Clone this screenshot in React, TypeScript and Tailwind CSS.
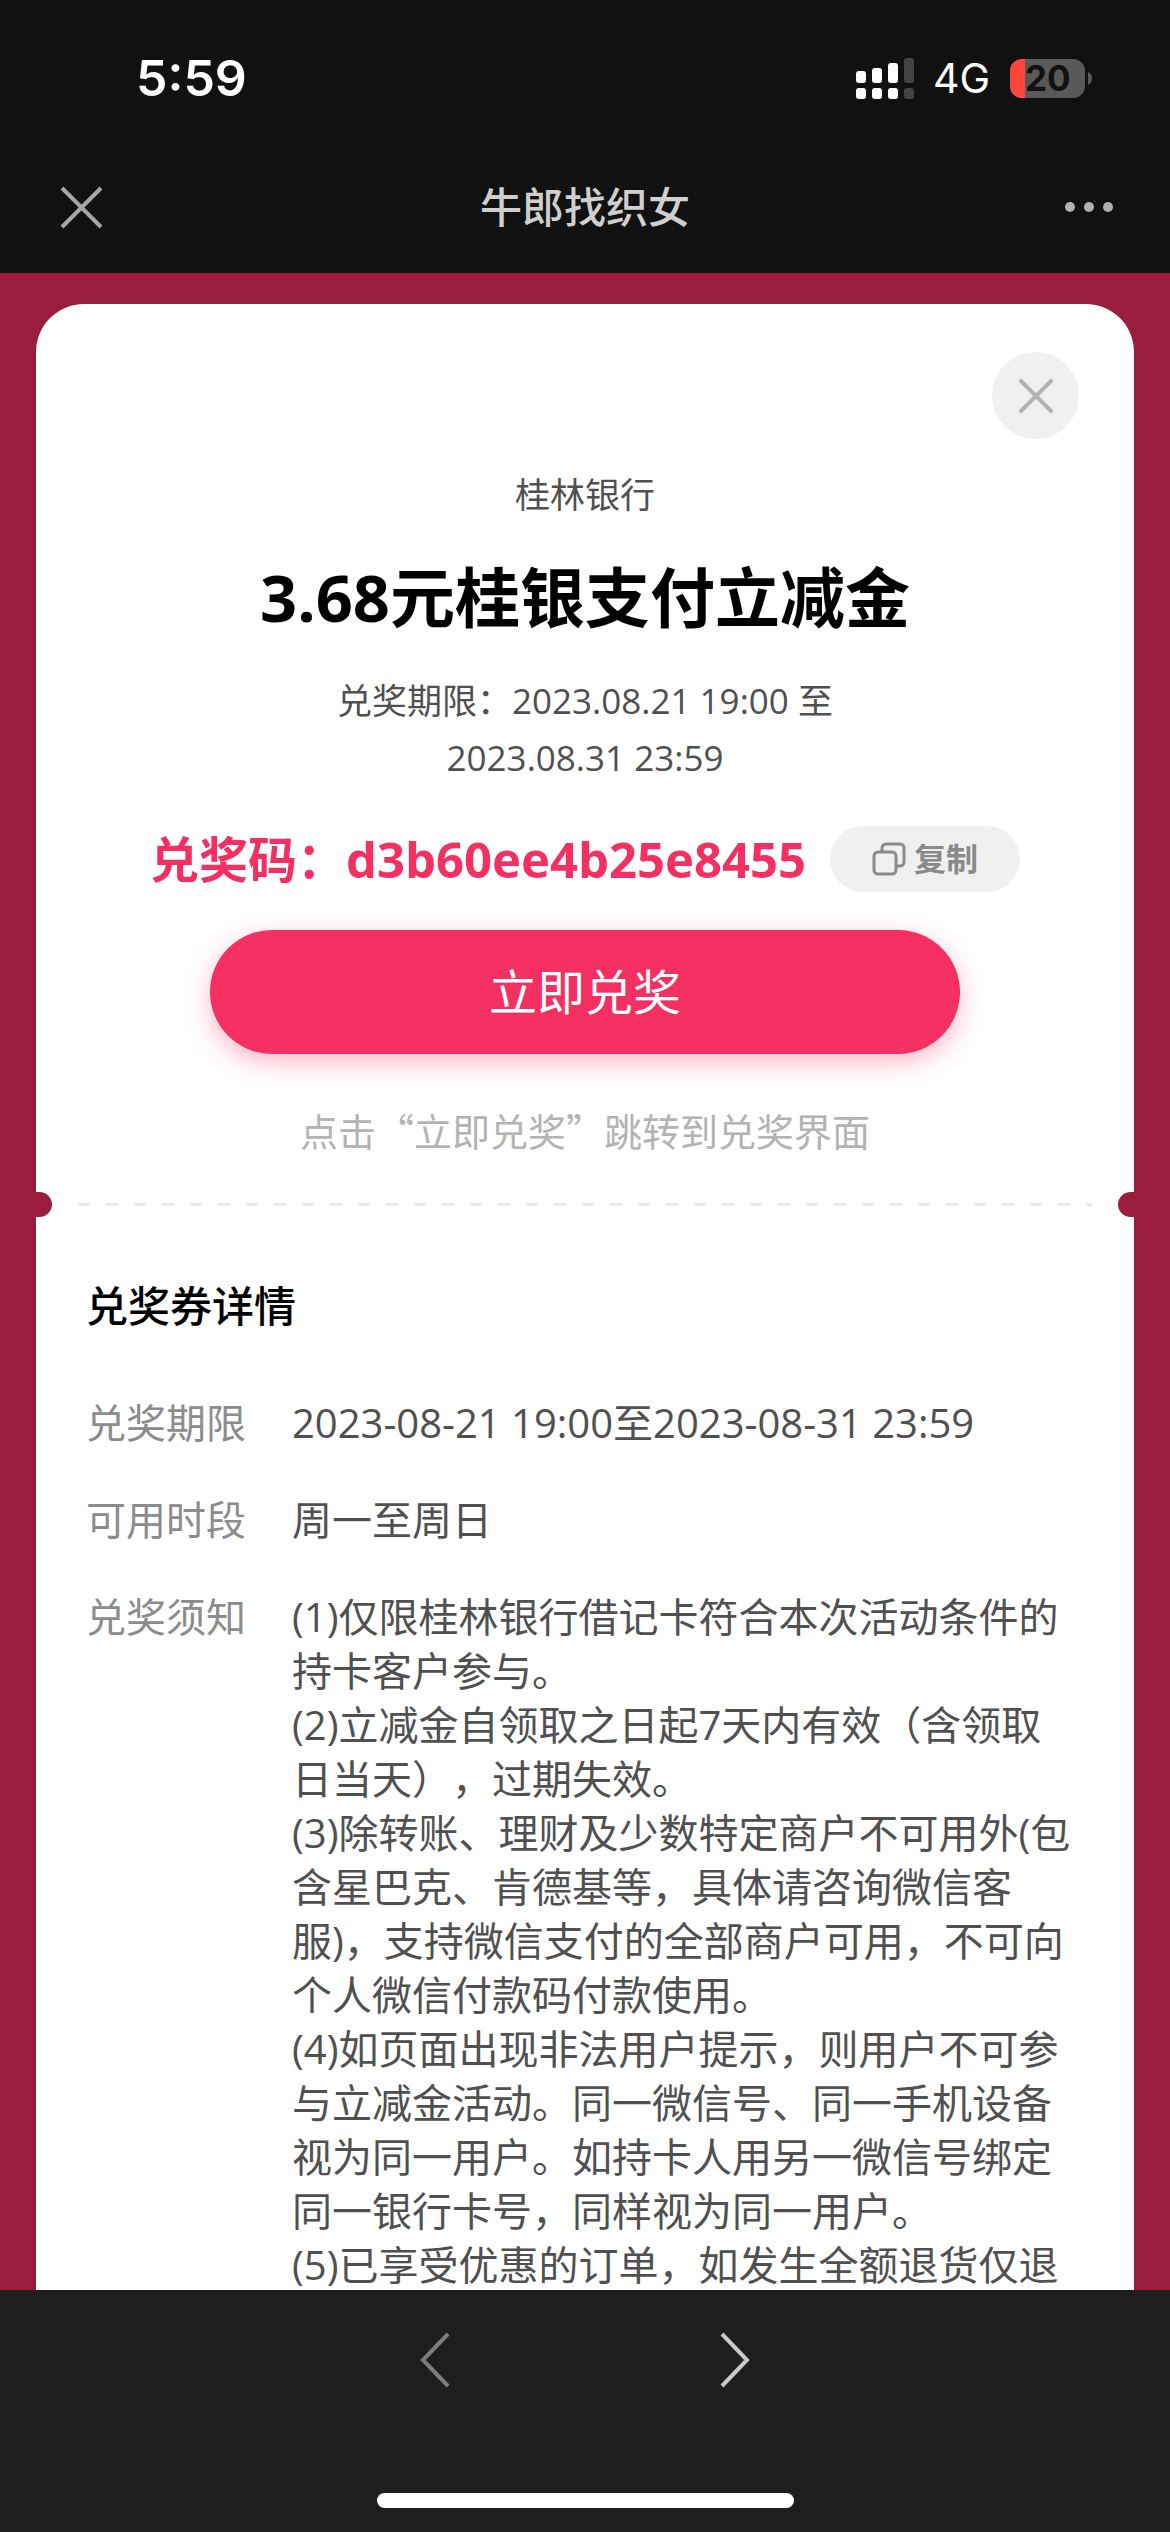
import React from "react";

const noticeLines = [
  "(1)仅限桂林银行借记卡符合本次活动条件的持卡客户参与。",
  "(2)立减金自领取之日起7天内有效（含领取日当天），过期失效。",
  "(3)除转账、理财及少数特定商户不可用外(包含星巴克、肯德基等，具体请咨询微信客服)，支持微信支付的全部商户可用，不可向个人微信付款码付款使用。",
  "(4)如页面出现非法用户提示，则用户不可参与立减金活动。同一微信号、同一手机设备视为同一用户。如持卡人用另一微信号绑定同一银行卡号，同样视为同一用户。",
  "(5)已享受优惠的订单，如发生全额退货仅退",
];

function SignalIcon() {
  const bars = [
    { x: 0, y: 13, h: 12, fill: "#fff" },
    { x: 16, y: 10, h: 15, fill: "#fff" },
    { x: 32, y: 5, h: 20, fill: "#fff" },
    { x: 48, y: 0, h: 25, fill: "#434343" },
  ];
  return (
    <svg width="58" height="41" viewBox="0 0 58 41" aria-hidden="true">
      {bars.map((b) => (
        <g key={b.x} fill={b.fill}>
          <rect x={b.x} y={b.y} width="10" height={b.h} rx="3" />
          <rect x={b.x} y="30" width="10" height="11" rx="3" />
        </g>
      ))}
    </svg>
  );
}

function Battery() {
  return (
    <div className="flex items-center gap-[3px]">
      <div className="flex h-[39px] w-[75px] items-center rounded-[12px] bg-[#595959]">
        <div className="h-full w-[15px] shrink-0 rounded-l-[12px] bg-[#ff453a]" />
        <span className="font-['Inter'] text-[35px] leading-[39px] font-bold text-[#111111]">20</span>
      </div>
      <svg width="4" height="13" viewBox="0 0 4 13" aria-hidden="true">
        <path d="M0 0C2.500 1 4 3.500 4 6.500S2.500 12 0 13Z" fill="#595959" />
      </svg>
    </div>
  );
}

function StatusBar() {
  return (
    <div className="flex h-[156px] items-center justify-between pr-[78px] pl-[136px] font-['Inter'] text-white">
      <span className="text-[50px] leading-none font-semibold">5:59</span>
      <div className="flex items-center">
        <SignalIcon />
        <span className="mr-5 ml-[19px] text-[41px] leading-none">4G</span>
        <Battery />
      </div>
    </div>
  );
}

function NavBar() {
  return (
    <div className="flex h-[117px] items-start justify-between px-[56px] pt-[21px]">
      <button type="button" aria-label="关闭" className="flex h-[60px] w-[60px] items-center">
        <svg width="50" height="50" viewBox="0 0 50 50" fill="none" stroke="#a6a6a6" strokeWidth="4">
          <path d="M6 6L45 45M45 6L6 45" />
        </svg>
      </button>
      <h1 className="text-[42px] leading-[60px] font-medium text-[#cfcfcf]">牛郎找织女</h1>
      <button type="button" aria-label="更多" className="flex h-[60px] w-[60px] items-center justify-end">
        <svg width="50" height="10" viewBox="0 0 50 10" fill="#b0b0b0">
          <circle cx="6" cy="5" r="5" />
          <circle cx="25" cy="5" r="5" />
          <circle cx="44" cy="5" r="5" />
        </svg>
      </button>
    </div>
  );
}

function Divider() {
  return (
    <div className="flex h-[25px] items-center justify-between">
      <div className="h-[25px] w-4 rounded-r-full bg-[#9b1d3c]" />
      <div className="mx-[26px] h-[3px] flex-1 bg-[repeating-linear-gradient(90deg,#e9e9e9_0_12px,transparent_12px_28px)]" />
      <div className="h-[25px] w-4 rounded-l-full bg-[#9b1d3c]" />
    </div>
  );
}

function DetailRow({ label, children }: { label: string; children: React.ReactNode }) {
  return (
    <div className="flex gap-[46px] text-[40px] leading-[54px]">
      <dt className="shrink-0 text-[#8c8c8c]">{label}</dt>
      <dd className="min-w-0 flex-1 text-[#505050]">{children}</dd>
    </div>
  );
}

export default function App() {
  return (
    <div className="flex h-screen flex-col overflow-hidden bg-[#9b1d3c] font-['Open_Sans','Noto_Sans_CJK_SC',sans-serif] [text-spacing-trim:space-all]">
      <header className="shrink-0 bg-[#111111]">
        <StatusBar />
        <NavBar />
      </header>

      <main className="min-h-0 flex-1 overflow-hidden px-9 pt-[31px]">
        <div className="rounded-t-[48px] bg-white pt-12">
          <section className="flex flex-col items-center">
            <button
              type="button"
              aria-label="关闭弹窗"
              className="mr-[55px] flex h-[87px] w-[87px] items-center justify-center self-end rounded-full bg-[#f0f0f0]"
            >
              <svg width="36" height="36" viewBox="0 0 36 36" fill="none" stroke="#b3b3b3" strokeWidth="4" strokeLinecap="round">
                <path d="M3 3L33 33M33 3L3 33" />
              </svg>
            </button>
            <p className="mt-[31px] text-[35px] leading-[50px] text-[#505050]">桂林银行</p>
            <h2 className="mt-[31px] text-[65px] leading-[92px] font-bold text-black">3.68元桂银支付立减金</h2>
            <p className="mt-[29px] w-[520px] text-center text-[35px] leading-[57px] text-[#505050]">
              兑奖期限：2023.08.21 19:00 至 2023.08.31 23:59
            </p>
            <div className="mt-[40px] flex items-center gap-6">
              <p className="text-[49px] leading-[66px] font-bold text-[#f33061]">兑奖码：d3b60ee4b25e8455</p>
              <button
                type="button"
                className="flex h-[66px] w-[190px] items-center justify-center gap-2 rounded-full bg-[#f0f0f0] text-[32px] font-bold text-[#8a8a8a]"
              >
                <svg width="34" height="34" viewBox="0 0 34 34" fill="none" stroke="#8a8a8a" strokeWidth="3">
                  <rect x="2" y="10" width="22" height="22" rx="4" />
                  <path d="M10 10V6a4 4 0 0 1 4-4h14a4 4 0 0 1 4 4v14a4 4 0 0 1-4 4h-4" />
                </svg>
                复制
              </button>
            </div>
            <button
              type="button"
              className="mt-[38px] h-[124px] w-[750px] rounded-full bg-[#f33061] text-[48px] text-white shadow-[0_8px_24px_rgba(243,48,97,0.35)]"
            >
              立即兑奖
            </button>
            <p className="mt-[48px] font-['Noto_Sans_CJK_SC',sans-serif] text-[38px] leading-[56px] text-[#b3b3b3]">
              点击“立即兑奖”跳转到兑奖界面
            </p>
          </section>

          <div className="mt-[34px]">
            <Divider />
          </div>

          <section className="pt-[59px] pr-[60px] pl-[50px]">
            <h3 className="text-[42px] leading-[60px] font-medium text-black">兑奖券详情</h3>
            <dl className="mt-[60px] flex flex-col gap-[43px]">
              <DetailRow label="兑奖期限">2023-08-21 19:00至2023-08-31 23:59</DetailRow>
              <DetailRow label="可用时段">周一至周日</DetailRow>
              <DetailRow label="兑奖须知">
                {noticeLines.map((line) => (
                  <p key={line}>{line}</p>
                ))}
              </DetailRow>
            </dl>
          </section>
        </div>
      </main>

      <footer className="flex h-[242px] shrink-0 flex-col items-center justify-between bg-[#1e1e1e] pt-[40px] pb-6">
        <nav className="flex gap-[240px]">
          <button type="button" aria-label="后退" className="flex h-[60px] w-[60px] items-center justify-center">
            <svg width="30" height="56" viewBox="0 0 30 56" fill="none" stroke="#7d7d7d" strokeWidth="4">
              <path d="M28 2L3 28L28 54" />
            </svg>
          </button>
          <button type="button" aria-label="前进" className="flex h-[60px] w-[60px] items-center justify-center">
            <svg width="30" height="56" viewBox="0 0 30 56" fill="none" stroke="#c8c8c8" strokeWidth="4">
              <path d="M2 2L27 28L2 54" />
            </svg>
          </button>
        </nav>
        <div className="h-[15px] w-[417px] rounded-full bg-white" />
      </footer>
    </div>
  );
}
